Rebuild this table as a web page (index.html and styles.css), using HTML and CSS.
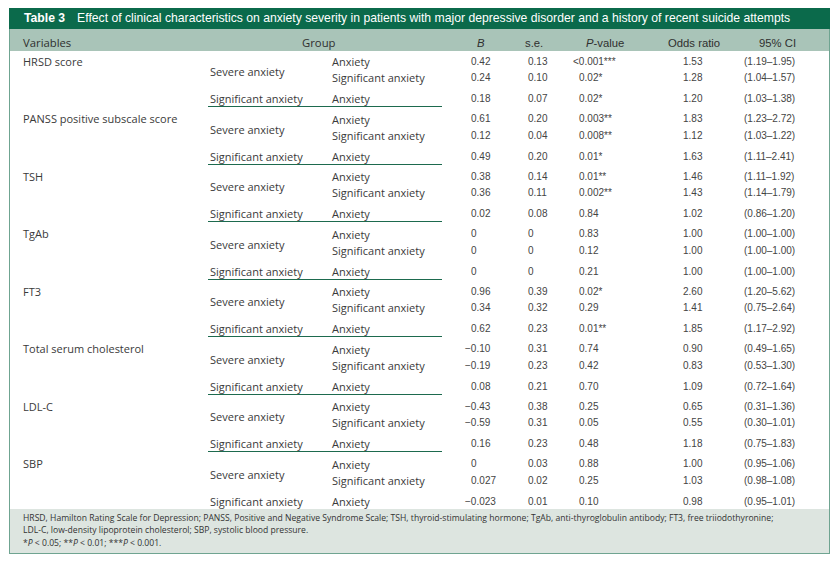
FILE: index.html
```html
<!DOCTYPE html>
<html>
<head>
<meta charset="utf-8">
<link rel="stylesheet" href="styles.css">
</head>
<body>
<div class="tbl">
  <div class="title"><b>Table 3</b><span class="ttext">Effect of clinical characteristics on anxiety severity in patients with major depressive disorder and a history of recent suicide attempts</span></div>
  <div class="box">
    <table>
      <colgroup>
        <col class="c1"><col class="c2"><col class="c3"><col class="c4"><col class="c5"><col class="c6"><col class="c7"><col class="c8">
      </colgroup>
      <thead>
        <tr>
          <th class="hv">Variables</th>
          <th colspan="2" class="hg">Group</th>
          <th class="hb"><i>B</i></th>
          <th class="hs">s.e.</th>
          <th class="hp"><i>P</i>-value</th>
          <th class="ho">Odds ratio</th>
          <th class="hc">95% CI</th>
        </tr>
      </thead>
      <tbody class="g">
        <tr class="r1"><td class="v">HRSD score</td><td rowspan="2" class="sev">Severe anxiety</td><td class="s">Anxiety</td><td class="n b">0.42</td><td class="n se">0.13</td><td class="n p"><span class="h">&lt;</span>0.001***</td><td class="n o">1.53</td><td class="n ci">(1.19–1.95)</td></tr>
        <tr class="r2"><td></td><td class="s">Significant anxiety</td><td class="n b">0.24</td><td class="n se">0.10</td><td class="n p">0.02*</td><td class="n o">1.28</td><td class="n ci">(1.04–1.57)</td></tr>
        <tr class="r3"><td></td><td class="s ln">Significant anxiety</td><td class="s ln">Anxiety</td><td class="n b">0.18</td><td class="n se">0.07</td><td class="n p">0.02*</td><td class="n o">1.20</td><td class="n ci">(1.03–1.38)</td></tr>
      </tbody>
      <tbody class="g">
        <tr class="r1"><td class="v">PANSS positive subscale score</td><td rowspan="2" class="sev">Severe anxiety</td><td class="s">Anxiety</td><td class="n b">0.61</td><td class="n se">0.20</td><td class="n p">0.003**</td><td class="n o">1.83</td><td class="n ci">(1.23–2.72)</td></tr>
        <tr class="r2"><td></td><td class="s">Significant anxiety</td><td class="n b">0.12</td><td class="n se">0.04</td><td class="n p">0.008**</td><td class="n o">1.12</td><td class="n ci">(1.03–1.22)</td></tr>
        <tr class="r3"><td></td><td class="s ln">Significant anxiety</td><td class="s ln">Anxiety</td><td class="n b">0.49</td><td class="n se">0.20</td><td class="n p">0.01*</td><td class="n o">1.63</td><td class="n ci">(1.11–2.41)</td></tr>
      </tbody>
      <tbody class="g">
        <tr class="r1"><td class="v">TSH</td><td rowspan="2" class="sev">Severe anxiety</td><td class="s">Anxiety</td><td class="n b">0.38</td><td class="n se">0.14</td><td class="n p">0.01**</td><td class="n o">1.46</td><td class="n ci">(1.11–1.92)</td></tr>
        <tr class="r2"><td></td><td class="s">Significant anxiety</td><td class="n b">0.36</td><td class="n se">0.11</td><td class="n p">0.002**</td><td class="n o">1.43</td><td class="n ci">(1.14–1.79)</td></tr>
        <tr class="r3"><td></td><td class="s ln">Significant anxiety</td><td class="s ln">Anxiety</td><td class="n b">0.02</td><td class="n se">0.08</td><td class="n p">0.84</td><td class="n o">1.02</td><td class="n ci">(0.86–1.20)</td></tr>
      </tbody>
      <tbody class="g">
        <tr class="r1"><td class="v">TgAb</td><td rowspan="2" class="sev">Severe anxiety</td><td class="s">Anxiety</td><td class="n b">0</td><td class="n se">0</td><td class="n p">0.83</td><td class="n o">1.00</td><td class="n ci">(1.00–1.00)</td></tr>
        <tr class="r2"><td></td><td class="s">Significant anxiety</td><td class="n b">0</td><td class="n se">0</td><td class="n p">0.12</td><td class="n o">1.00</td><td class="n ci">(1.00–1.00)</td></tr>
        <tr class="r3"><td></td><td class="s ln">Significant anxiety</td><td class="s ln">Anxiety</td><td class="n b">0</td><td class="n se">0</td><td class="n p">0.21</td><td class="n o">1.00</td><td class="n ci">(1.00–1.00)</td></tr>
      </tbody>
      <tbody class="g">
        <tr class="r1"><td class="v">FT3</td><td rowspan="2" class="sev">Severe anxiety</td><td class="s">Anxiety</td><td class="n b">0.96</td><td class="n se">0.39</td><td class="n p">0.02*</td><td class="n o">2.60</td><td class="n ci">(1.20–5.62)</td></tr>
        <tr class="r2"><td></td><td class="s">Significant anxiety</td><td class="n b">0.34</td><td class="n se">0.32</td><td class="n p">0.29</td><td class="n o">1.41</td><td class="n ci">(0.75–2.64)</td></tr>
        <tr class="r3"><td></td><td class="s ln">Significant anxiety</td><td class="s ln">Anxiety</td><td class="n b">0.62</td><td class="n se">0.23</td><td class="n p">0.01**</td><td class="n o">1.85</td><td class="n ci">(1.17–2.92)</td></tr>
      </tbody>
      <tbody class="g">
        <tr class="r1"><td class="v">Total serum cholesterol</td><td rowspan="2" class="sev">Severe anxiety</td><td class="s">Anxiety</td><td class="n b"><span class="h">−</span>0.10</td><td class="n se">0.31</td><td class="n p">0.74</td><td class="n o">0.90</td><td class="n ci">(0.49–1.65)</td></tr>
        <tr class="r2"><td></td><td class="s">Significant anxiety</td><td class="n b"><span class="h">−</span>0.19</td><td class="n se">0.23</td><td class="n p">0.42</td><td class="n o">0.83</td><td class="n ci">(0.53–1.30)</td></tr>
        <tr class="r3"><td></td><td class="s ln">Significant anxiety</td><td class="s ln">Anxiety</td><td class="n b">0.08</td><td class="n se">0.21</td><td class="n p">0.70</td><td class="n o">1.09</td><td class="n ci">(0.72–1.64)</td></tr>
      </tbody>
      <tbody class="g">
        <tr class="r1"><td class="v">LDL-C</td><td rowspan="2" class="sev">Severe anxiety</td><td class="s">Anxiety</td><td class="n b"><span class="h">−</span>0.43</td><td class="n se">0.38</td><td class="n p">0.25</td><td class="n o">0.65</td><td class="n ci">(0.31–1.36)</td></tr>
        <tr class="r2"><td></td><td class="s">Significant anxiety</td><td class="n b"><span class="h">−</span>0.59</td><td class="n se">0.31</td><td class="n p">0.05</td><td class="n o">0.55</td><td class="n ci">(0.30–1.01)</td></tr>
        <tr class="r3"><td></td><td class="s ln">Significant anxiety</td><td class="s ln">Anxiety</td><td class="n b">0.16</td><td class="n se">0.23</td><td class="n p">0.48</td><td class="n o">1.18</td><td class="n ci">(0.75–1.83)</td></tr>
      </tbody>
      <tbody class="g last">
        <tr class="r1"><td class="v">SBP</td><td rowspan="2" class="sev">Severe anxiety</td><td class="s">Anxiety</td><td class="n b">0</td><td class="n se">0.03</td><td class="n p">0.88</td><td class="n o">1.00</td><td class="n ci">(0.95–1.06)</td></tr>
        <tr class="r2"><td></td><td class="s">Significant anxiety</td><td class="n b">0.027</td><td class="n se">0.02</td><td class="n p">0.25</td><td class="n o">1.03</td><td class="n ci">(0.98–1.08)</td></tr>
        <tr class="r3"><td></td><td class="s">Significant anxiety</td><td class="s">Anxiety</td><td class="n b"><span class="h">−</span>0.023</td><td class="n se">0.01</td><td class="n p">0.10</td><td class="n o">0.98</td><td class="n ci">(0.95–1.01)</td></tr>
      </tbody>
    </table>
    <div class="foot">
      <p>HRSD, Hamilton Rating Scale for Depression; PANSS, Positive and Negative Syndrome Scale; TSH, thyroid-stimulating hormone; TgAb, anti-thyroglobulin antibody; FT3, free triiodothyronine;</p>
      <p>LDL-C, low-density lipoprotein cholesterol; SBP, systolic blood pressure.</p>
      <p>*<i>P</i> &lt; 0.05; **<i>P</i> &lt; 0.01; ***<i>P</i> &lt; 0.001.</p>
    </div>
  </div>
</div>
</body>
</html>
```
FILE: styles.css
```css
html, body {
  margin: 0;
  padding: 0;
  background: #ffffff;
}
body {
  padding: 8px 0 0 9px;
  font-family: "Open Sans", "Liberation Sans", sans-serif;
  color: #3a3a3a;
}
.tbl {
  width: 821px;
}
.title {
  background: #0b6a4b;
  color: #ffffff;
  height: 21px;
  line-height: 21px;
  font-family: "Liberation Sans", Arial, sans-serif;
  font-size: 12.2px;
  padding-left: 15px;
  white-space: nowrap;
}
.title b {
  font-weight: bold;
}
.ttext {
  margin-left: 12px;
}
.box {
  border: 1px solid #6fa491;
  border-top: none;
}
table {
  width: 100%;
  border-collapse: collapse;
  table-layout: fixed;
  font-size: 11px;
}
col.c1 { width: 198px; }
col.c2 { width: 122px; }
col.c3 { width: 112px; }
col.c4 { width: 73px; }
col.c5 { width: 55px; }
col.c6 { width: 90px; }
col.c7 { width: 75px; }
col.c8 { width: auto; }
th, td {
  padding: 0;
  text-align: left;
  white-space: nowrap;
  vertical-align: top;
  line-height: 16px;
}
thead th {
  background: #a9c4b8;
  font-weight: normal;
  font-size: 11.3px;
  padding-top: 6px;
  height: 16px;
  color: #2f2f2f;
}
th.hv { padding-left: 13px; }
th.hg { padding-left: 94px; }
th.hb { padding-left: 35px; font-family: "Liberation Sans", Arial, sans-serif; }
th.hs { padding-left: 10px; font-family: "Liberation Sans", Arial, sans-serif; }
th.hp { padding-left: 16px; font-family: "Liberation Sans", Arial, sans-serif; }
th.ho { padding-left: 8px; font-family: "Liberation Sans", Arial, sans-serif; }
th.hc { padding-left: 24px; font-family: "Liberation Sans", Arial, sans-serif; }

td.v { padding-left: 13px; }
td.sev, td.s { padding-left: 2px; }
td.n {
  font-family: "Liberation Sans", Arial, sans-serif;
  font-size: 10px;
  color: #444;
}
td.b { padding-left: 29px; }
td.se { padding-left: 13px; }
td.p { padding-left: 9px; }
td.o { padding-left: 23px; }
td.ci { padding-left: 9px; }
.h {
  margin-left: -0.6em;
}

tbody.g tr.r1 td { padding-top: 4.5px; }
tbody.g tr.r1 td.sev { padding-top: 14.5px; }
tbody.g:first-of-type tr.r1 td { padding-top: 3px; }
tbody.g:first-of-type tr.r1 td.sev { padding-top: 13px; }
tbody.g tr.r3 td {
  padding-top: 6px;
  line-height: 14px;
}
td.ln {
  border-bottom: 1px solid #1d6a4e;
}

.foot {
  background: #dde5e0;
  padding: 3px 13px 4px;
  font-size: 8.6px;
  line-height: 12.5px;
  color: #333;
}
.foot p {
  margin: 0;
  white-space: nowrap;
}
```
